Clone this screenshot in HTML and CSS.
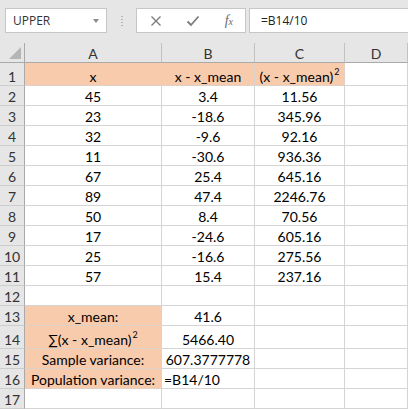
FILE: index.html
```html
<!DOCTYPE html>
<html lang="en">
<head>
    <meta charset="UTF-8">
    <meta name="viewport" content="width=device-width, initial-scale=1.0">
    <title>Variance</title>
    <link rel="stylesheet" href="styles.css">
</head>
<body>

<!-- Barre de formule -->
<div class="toolbar">
    <div class="name-box">
        <span>UPPER</span>
        <span class="caret"></span>
    </div>
    <div class="grip"></div>
    <div class="func-box">
        <svg width="12" height="12" viewBox="0 0 12 12"><path d="M1.5 1.5 L10.5 10.5 M10.5 1.5 L1.5 10.5" stroke="#7b7b7b" stroke-width="1.4" fill="none"/></svg>
        <svg width="14" height="12" viewBox="0 0 14 12"><path d="M1.5 6.5 L5 10 L12.5 1.5" stroke="#7b7b7b" stroke-width="1.8" fill="none"/></svg>
        <span class="fx">f<small>x</small></span>
    </div>
    <div class="formula">=B14/10</div>
</div>

<!-- Feuille -->
<div class="sheet">
    <div class="row head">
        <div class="corner"><span class="tri"></span></div>
        <div>A</div><div>B</div><div>C</div><div>D</div>
    </div>
    <div class="row tall">
        <div class="num">1</div>
        <div class="fill">x</div><div class="fill">x - x_mean</div><div class="fill">(x - x_mean)<sup>2</sup></div><div></div>
    </div>
    <div class="row"><div class="num">2</div><div>45</div><div>3.4</div><div>11.56</div><div></div></div>
    <div class="row"><div class="num">3</div><div>23</div><div>-18.6</div><div>345.96</div><div></div></div>
    <div class="row"><div class="num">4</div><div>32</div><div>-9.6</div><div>92.16</div><div></div></div>
    <div class="row"><div class="num">5</div><div>11</div><div>-30.6</div><div>936.36</div><div></div></div>
    <div class="row"><div class="num">6</div><div>67</div><div>25.4</div><div>645.16</div><div></div></div>
    <div class="row"><div class="num">7</div><div>89</div><div>47.4</div><div>2246.76</div><div></div></div>
    <div class="row"><div class="num">8</div><div>50</div><div>8.4</div><div>70.56</div><div></div></div>
    <div class="row"><div class="num">9</div><div>17</div><div>-24.6</div><div>605.16</div><div></div></div>
    <div class="row"><div class="num">10</div><div>25</div><div>-16.6</div><div>275.56</div><div></div></div>
    <div class="row"><div class="num">11</div><div>57</div><div>15.4</div><div>237.16</div><div></div></div>
    <div class="row"><div class="num">12</div><div></div><div></div><div></div><div></div></div>
    <div class="row"><div class="num">13</div><div class="fill">x_mean:</div><div>41.6</div><div></div><div></div></div>
    <div class="row tall"><div class="num">14</div><div class="fill">&sum;(x - x_mean)<sup>2</sup></div><div>5466.40</div><div></div><div></div></div>
    <div class="row"><div class="num">15</div><div class="fill">Sample variance:</div><div>607.3777778</div><div></div><div></div></div>
    <div class="row"><div class="num">16</div><div class="fill">Population variance:</div><div class="left">=B14/10</div><div></div><div></div></div>
    <div class="row"><div class="num">17</div><div></div><div></div><div></div><div></div></div>
</div>

</body>
</html>
```

FILE: styles.css
```css
body {
    margin: 0;
    padding: 0;
    background-color: #fff;
    overflow: hidden;
}

/* barre du haut */
.toolbar {
    display: flex;
    align-items: center;
    height: 43px;
    padding: 0 0 2px 5px;
    box-sizing: border-box;
    background-color: #e6e6e6;
    font-family: "Open Sans", sans-serif;
    font-size: 12px;
}
.name-box {
    display: flex;
    align-items: center;
    justify-content: space-between;
    width: 102px;
    height: 25px;
    padding: 0 7px 0 7px;
    box-sizing: border-box;
    background-color: #fff;
    border: 1px solid #c6c6c6;
    color: #333;
}
.caret {
    width: 0;
    height: 0;
    border-left: 3px solid transparent;
    border-right: 3px solid transparent;
    border-top: 4px solid #8a8a8a;
}
.grip {
    width: 2px;
    height: 11px;
    margin: 0 13px 0 14px;
    background-image: radial-gradient(circle, #b3b3b3 45%, transparent 50%);
    background-size: 2px 3px;
}
.func-box {
    display: flex;
    align-items: center;
    justify-content: space-between;
    width: 110px;
    height: 25px;
    padding: 0 12px 0 13px;
    box-sizing: border-box;
    background-color: #fff;
    border: 1px solid #c6c6c6;
}
.fx {
    font-family: "Liberation Serif", serif;
    font-style: italic;
    font-size: 14px;
    color: #6b6b6b;
}
.fx small {
    font-size: 10px;
}
.formula {
    flex: 1;
    height: 25px;
    margin: 0 -2px 0 3px;
    padding-left: 11px;
    box-sizing: border-box;
    line-height: 23px;
    background-color: #fff;
    border: 1px solid #c6c6c6;
    color: #222;
}

/* grille */
.sheet {
    font-family: Lato, sans-serif;
    font-size: 14px;
    color: #000;
}
.row {
    display: grid;
    grid-template-columns: 25px 137px 93px 90px 1fr;
    height: 20px;
}
.row > div {
    padding-top: 3px;
    line-height: 16px;
    text-align: center;
    border-right: 1px solid #d4d4d4;
    border-bottom: 1px solid #d4d4d4;
    white-space: nowrap;
    overflow: hidden;
}
.row.tall {
    height: 23px;
}
.row.tall > div {
    padding-top: 6px;
}
.row > div.left {
    text-align: left;
    padding-left: 2px;
}
.row > .num {
    background-color: #e6e6e6;
    border-right-color: #a9a9a9;
    border-bottom-color: #cdcdcd;
    color: #333;
}
.row > .fill {
    background-color: #f8cbad;
    border-color: #dcd2ca;
}
.head > div {
    background-color: #e6e6e6;
    border-right-color: #c2c2c2;
    border-bottom-color: #a9a9a9;
    color: #333;
}
.head > .corner {
    position: relative;
    border-right-color: #a9a9a9;
}
.tri {
    position: absolute;
    right: 3px;
    bottom: 3px;
    width: 0;
    height: 0;
    border-left: 12px solid transparent;
    border-bottom: 12px solid #b5b5b5;
}
sup {
    font-size: 9px;
    line-height: 0;
    vertical-align: 7px;
    margin-left: 1px;
}
```
